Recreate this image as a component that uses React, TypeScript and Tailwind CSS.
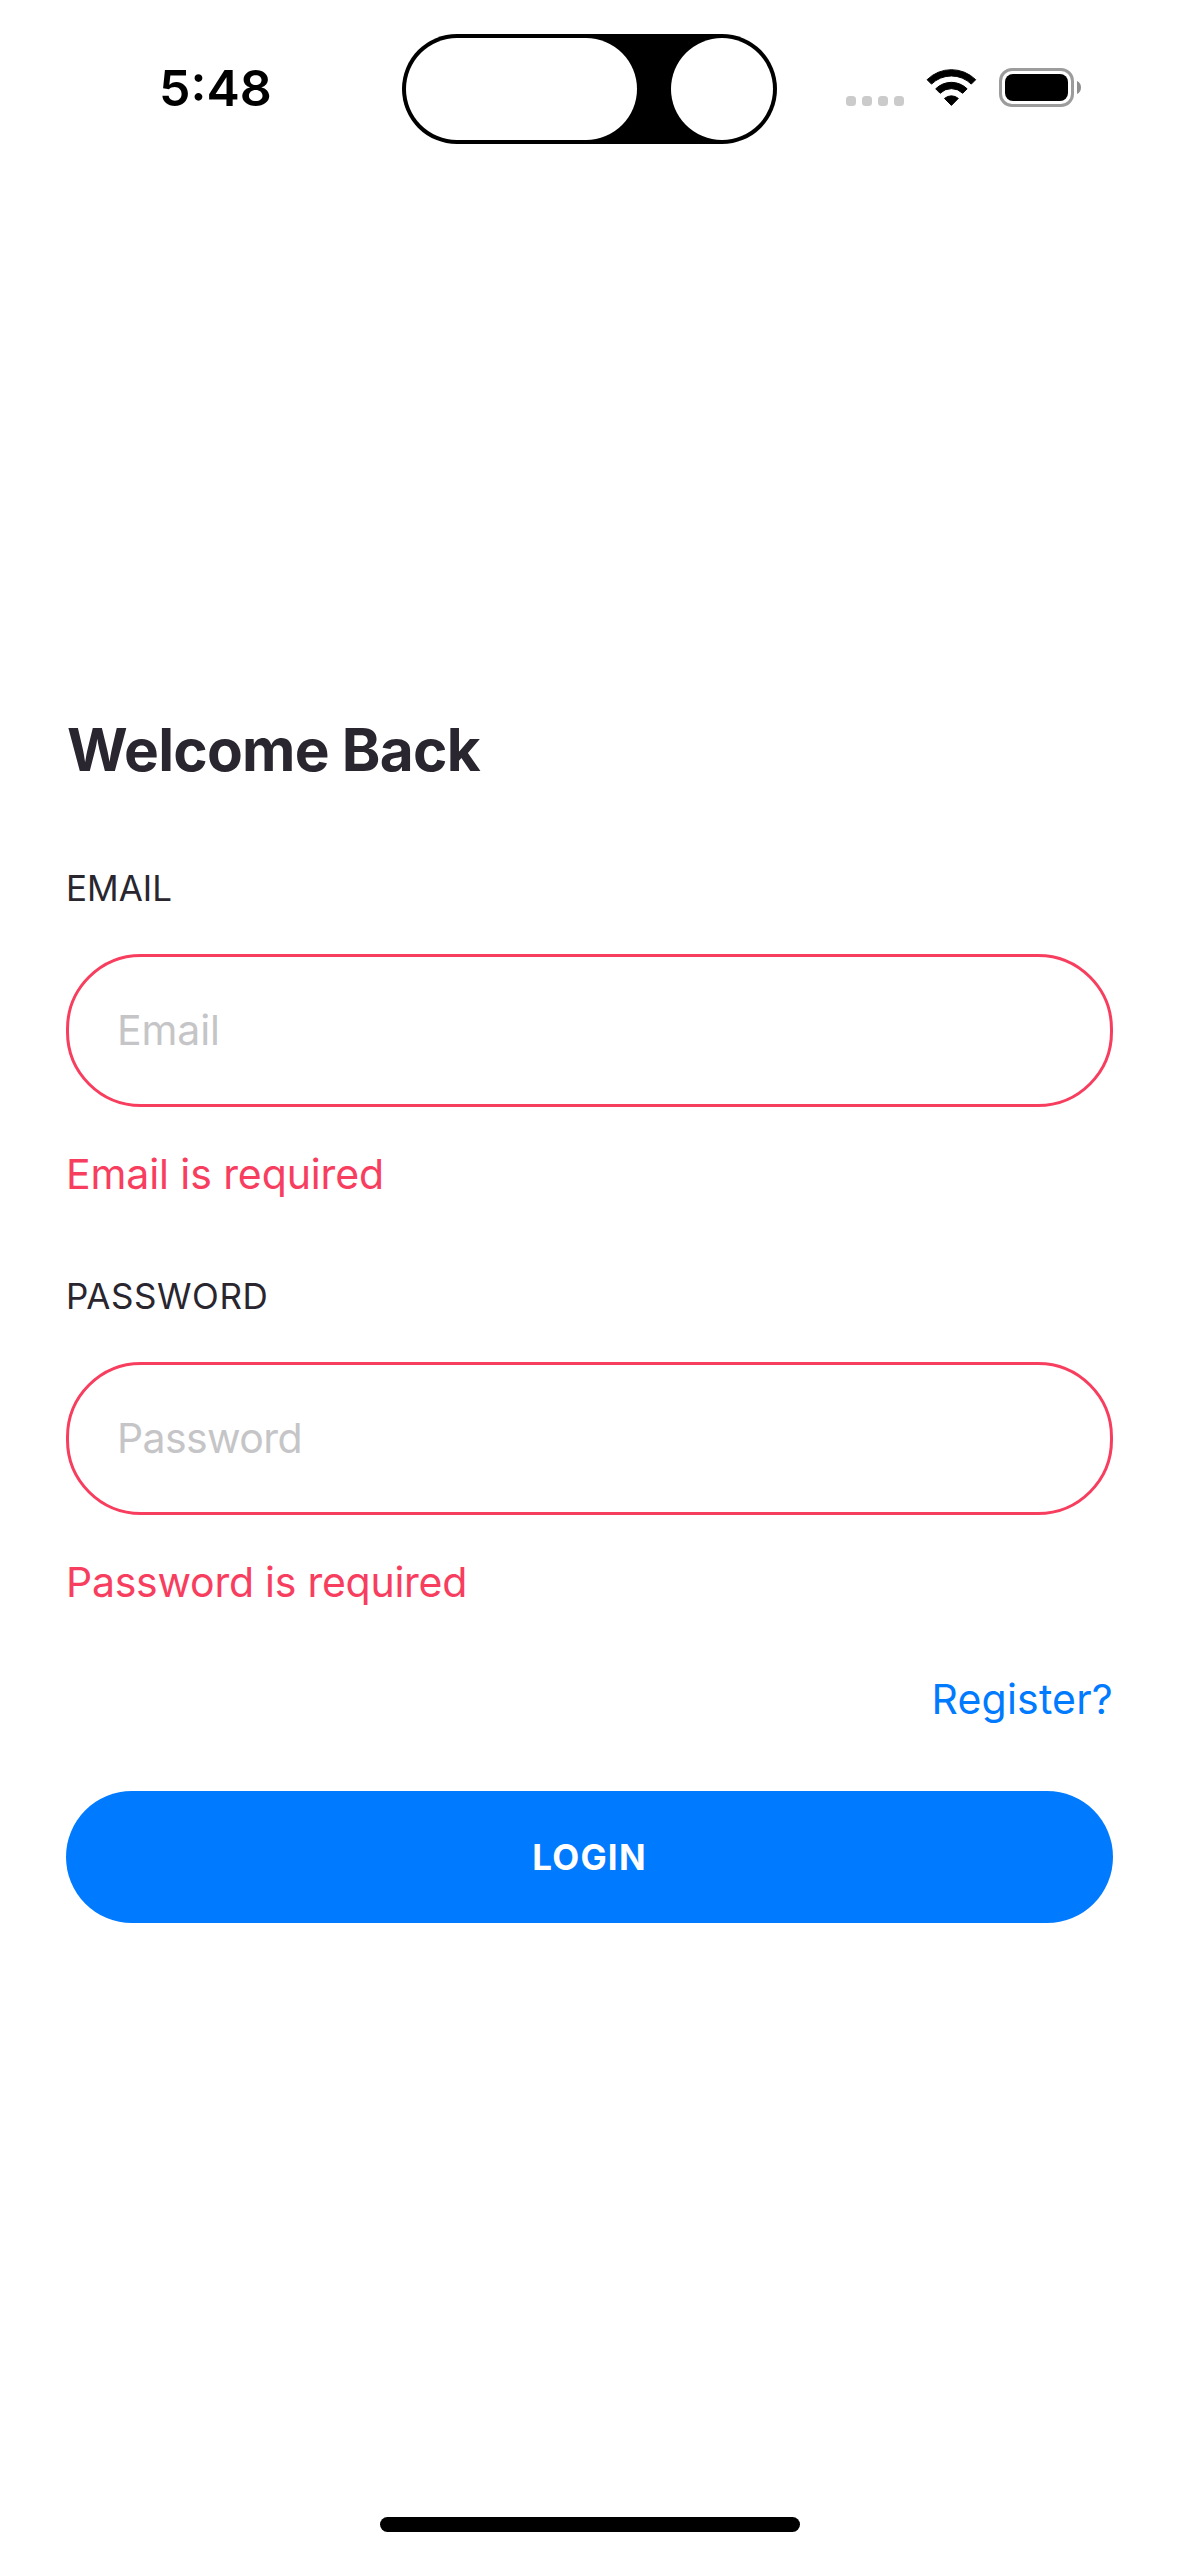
function SignalDots() {
  return (
    <div className="mt-[96px] ml-[69px] flex gap-[6px]">
      <span className="size-[10px] rounded-[3.5px] bg-[#cbcbcb]" />
      <span className="size-[10px] rounded-[3.5px] bg-[#cbcbcb]" />
      <span className="size-[10px] rounded-[3.5px] bg-[#cbcbcb]" />
      <span className="size-[10px] rounded-[3.5px] bg-[#cbcbcb]" />
    </div>
  );
}

function WifiIcon() {
  return (
    <svg
      className="mt-[69px] ml-[22px] h-[37px] w-[51px] shrink-0"
      viewBox="0 0 51 37"
      fill="#000"
      stroke="#000"
      strokeWidth="1"
      strokeLinejoin="round"
    >
      <path d="M1.1 10.7A34.5 34.5 0 0 1 49.7 10.7L45.3 15.1A28.4 28.4 0 0 0 5.5 15.1Z" />
      <path d="M9.7 19.8A22.3 22.3 0 0 1 41.1 19.8L36.7 24.3A16 16 0 0 0 14.1 24.3Z" />
      <path d="M18.5 29.4A10.6 10.6 0 0 1 32.3 29.4L25.4 36.4Z" />
    </svg>
  );
}

function BatteryIcon() {
  return (
    <div className="mt-[68px] ml-[22px] flex items-center">
      <div className="h-[39px] w-[75px] shrink-0 rounded-[13px] border-3 border-[#9c9c9c] p-[3px]">
        <div className="h-full w-full rounded-[8px] bg-black" />
      </div>
      <svg className="ml-[3px] h-[13px] w-[4px] shrink-0" viewBox="0 0 4 13" fill="#8e8e8e">
        <path d="M0 0C2.5 1 4 3.5 4 6.5S2.5 12 0 13Z" />
      </svg>
    </div>
  );
}

function StatusBar() {
  return (
    <header className="flex h-[177px] shrink-0 items-start">
      <time className="mt-[58px] ml-[159px] w-[243px] shrink-0 text-[50px] leading-[60px] font-semibold tracking-normal text-black">
        5:48
      </time>
      <div className="mt-[34px] flex h-[110px] w-[375px] shrink-0 items-center justify-between rounded-full bg-black px-[4px]">
        <div className="h-[102px] w-[231px] rounded-full bg-white" />
        <div className="size-[102px] rounded-full bg-white" />
      </div>
      <SignalDots />
      <WifiIcon />
      <BatteryIcon />
    </header>
  );
}

type FieldProps = {
  label: string;
  labelClass: string;
  type: string;
  placeholder: string;
  placeholderClass: string;
  error: string;
  errorClass: string;
};

function Field({ label, labelClass, type, placeholder, placeholderClass, error, errorClass }: FieldProps) {
  return (
    <div className="flex flex-col">
      <label className={`text-[35px] leading-[48px] text-[#29262f] ${labelClass}`}>{label}</label>
      <input
        type={type}
        placeholder={placeholder}
        className={`mt-[42px] h-[153px] w-full rounded-[75px] border-3 border-[#f83e5f] bg-white px-[48px] pb-[2px] text-[41px] outline-none placeholder:text-[#c5c5c7] ${placeholderClass}`}
      />
      <p className={`mt-[37px] text-[41px] leading-[60px] text-[#f83e5f] ${errorClass}`}>{error}</p>
    </div>
  );
}

export default function App() {
  return (
    <div className="flex h-[2556px] w-[1179px] flex-col overflow-hidden bg-white font-['Inter',sans-serif]">
      <StatusBar />
      <main className="flex flex-1 flex-col px-[66px] pt-[537px]">
        <h1 className="ml-[1px] text-[58.5px] leading-[72px] font-bold tracking-[-0.75px] text-[#29262f]">Welcome Back</h1>
        <div className="mt-[78px] flex flex-col gap-[68px]">
          <Field
            label="EMAIL"
            labelClass="tracking-normal"
            type="email"
            placeholder="Email"
            placeholderClass="tracking-[-0.1px]"
            error="Email is required"
            errorClass="tracking-[-0.1px]"
          />
          <Field
            label="PASSWORD"
            labelClass="tracking-[0.56px]"
            type="password"
            placeholder="Password"
            placeholderClass="tracking-[-0.6px]"
            error="Password is required"
            errorClass="tracking-[-0.25px]"
          />
        </div>
        <a className="mt-[57px] self-end text-[41px] leading-[60px] tracking-[0.2px] text-[#007aff]">Register?</a>
        <button className="mt-[62px] h-[132px] w-full rounded-full bg-[#007aff] text-[35px] font-[650] tracking-[1.2px] text-white">
          LOGIN
        </button>
      </main>
      <footer className="flex h-[39px] shrink-0 justify-center">
        <div className="h-[15px] w-[420px] rounded-full bg-black" />
      </footer>
    </div>
  );
}
